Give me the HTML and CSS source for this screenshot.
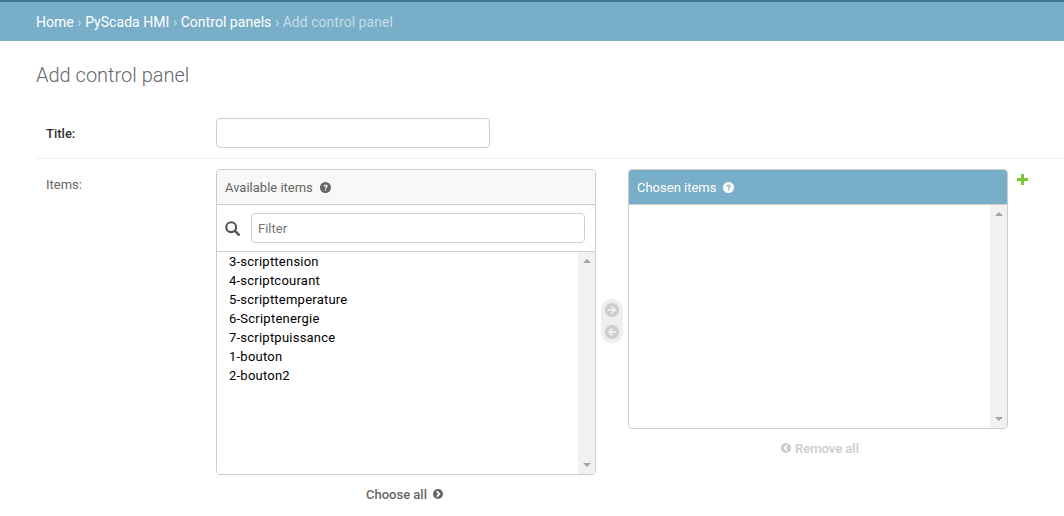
FILE: index.html
```html
<!DOCTYPE html>
<html lang="en">
<head>
    <meta charset="UTF-8">
    <meta name="viewport" content="width=device-width, initial-scale=1.0">
    <title>Add control panel</title>
    <link rel="stylesheet" href="styles.css">
</head>
<body>
    <div class="breadcrumbs">
        <a href="#">Home</a> › <a href="#">PyScada HMI</a> › <a href="#">Control panels</a> › Add control panel
    </div>

    <div class="content">
        <h1>Add control panel</h1>

        <form>
            <div class="form-row">
                <label class="required" for="id_title">Title:</label>
                <input class="title-input" id="id_title" type="text">
            </div>

            <div class="form-row">
                <label class="items-label">Items:</label>
                <div class="selector">
                    <div class="selector-side">
                        <div class="box">
                            <h2 class="box-title">Available items
                                <svg class="help" viewBox="0 0 12 12"><circle cx="6" cy="6" r="6" fill="currentColor"/><path d="M3.900 4.700c0-1.300 1-2.100 2.200-2.100s2.200.8 2.200 1.900c0 1.500-1.500 1.500-1.500 2.600H5.300c0-1.900 1.400-1.800 1.400-2.500 0-.4-.3-.6-.7-.6-.5 0-.7.3-.8.8zM5.300 7.800h1.500v1.500H5.300z" fill="#f8f8f8"/></svg>
                            </h2>
                            <div class="filter">
                                <svg class="search" viewBox="0 0 14 14"><circle cx="5.800" cy="5.800" r="4.600" fill="none" stroke="#555" stroke-width="2"/><path d="M9.200 9.200l3.600 3.600" stroke="#555" stroke-width="2.400" stroke-linecap="round"/></svg>
                                <input class="filter-input" type="text" placeholder="Filter">
                            </div>
                            <div class="list list-available">
                                <ul>
                                    <li>3-scripttension</li>
                                    <li>4-scriptcourant</li>
                                    <li>5-scripttemperature</li>
                                    <li>6-Scriptenergie</li>
                                    <li>7-scriptpuissance</li>
                                    <li>1-bouton</li>
                                    <li>2-bouton2</li>
                                </ul>
                                <div class="scrollbar"><span class="arrow-up"></span><span class="arrow-down"></span></div>
                            </div>
                        </div>
                        <a class="all-link choose-all" href="#">Choose all
                            <svg class="all-icon" viewBox="0 0 12 12"><circle cx="6" cy="6" r="6" fill="currentColor"/><path d="M4.600 2.900L7.700 6 4.600 9.100" fill="none" stroke="#fff" stroke-width="2"/></svg>
                        </a>
                    </div>

                    <div class="mover">
                        <svg class="mover-icon" viewBox="0 0 16 16"><circle cx="8" cy="8" r="8" fill="#ccc"/><path d="M3 8h8M7.500 4L11.500 8l-4 4" fill="none" stroke="#eee" stroke-width="2.400"/></svg>
                        <svg class="mover-icon" viewBox="0 0 16 16"><circle cx="8" cy="8" r="8" fill="#ccc"/><path d="M13 8H5M8.500 4L4.500 8l4 4" fill="none" stroke="#eee" stroke-width="2.400"/></svg>
                    </div>

                    <div class="selector-side">
                        <div class="box">
                            <h2 class="box-title box-title-chosen">Chosen items
                                <svg class="help" viewBox="0 0 12 12"><circle cx="6" cy="6" r="6" fill="currentColor"/><path d="M3.900 4.700c0-1.300 1-2.100 2.200-2.100s2.200.8 2.200 1.900c0 1.500-1.500 1.500-1.500 2.600H5.300c0-1.900 1.400-1.800 1.400-2.500 0-.4-.3-.6-.7-.6-.5 0-.7.3-.8.8zM5.300 7.800h1.500v1.500H5.300z" fill="#79aec8"/></svg>
                            </h2>
                            <div class="list list-chosen">
                                <ul></ul>
                                <div class="scrollbar"><span class="arrow-up"></span><span class="arrow-down"></span></div>
                            </div>
                        </div>
                        <a class="all-link remove-all" href="#">
                            <svg class="all-icon" viewBox="0 0 12 12"><circle cx="6" cy="6" r="6" fill="currentColor"/><path d="M7.400 2.900L4.300 6l3.100 3.100" fill="none" stroke="#fff" stroke-width="2"/></svg>
                            Remove all
                        </a>
                    </div>

                    <a class="add-related" href="#">
                        <svg viewBox="0 0 11 11"><path d="M4 0h3v4h4v3H7v4H4V7H0V4h4z" fill="#78c637"/></svg>
                    </a>
                </div>
            </div>
        </form>
    </div>
</body>
</html>
```

FILE: styles.css
```css
html, body {
    height: 100%;
    overflow: hidden;
}

body {
    margin: 0;
    font-family: Roboto, "Liberation Sans", sans-serif;
    font-size: 14px;
    color: #333;
    background-color: #fff;
}

a {
    text-decoration: none;
}

.breadcrumbs {
    height: 39px;
    line-height: 40px;
    padding: 0 36px;
    font-size: 14px;
    letter-spacing: .04px;
    color: #c4dce8;
    background-color: #79aec8;
    border-top: 2px solid #417690;
}

.breadcrumbs a {
    color: #fff;
}

.content {
    padding: 20px 0 0 36px;
}

h1 {
    margin: 0 0 19px 0;
    font-size: 20px;
    line-height: 28px;
    font-weight: 300;
    color: #666;
}

.form-row {
    display: flex;
    padding: 10px;
    border-bottom: 1px solid #eee;
}

.form-row label {
    width: 170px;
    flex-shrink: 0;
    font-size: 13px;
    color: #666;
}

.form-row label.required {
    line-height: 32px;
    height: 30px;
    font-weight: 500;
    color: #333;
}

.form-row .items-label {
    padding-top: 8px;
}

.title-input {
    box-sizing: border-box;
    width: 274px;
    height: 30px;
    margin: 0;
    border: 1px solid #ccc;
    border-radius: 4px;
}

.selector {
    display: flex;
    align-items: flex-start;
}

.selector-side {
    width: 380px;
}

.box {
    box-sizing: border-box;
    border: 1px solid #ccc;
    border-radius: 4px;
    overflow: hidden;
}

.box-title {
    display: flex;
    align-items: center;
    gap: 6px;
    box-sizing: border-box;
    height: 35px;
    margin: 0;
    padding: 0 8px;
    font-size: 13px;
    font-weight: 400;
    color: #666;
    background-color: #f8f8f8;
    border-bottom: 1px solid #ccc;
}

.box-title-chosen {
    color: #fff;
    background-color: #79aec8;
}

.help {
    width: 11px;
    height: 11px;
    margin-left: 1px;
}

.filter {
    display: flex;
    align-items: center;
    box-sizing: border-box;
    height: 47px;
    padding: 0 10px 0 8px;
    border-bottom: 1px solid #ccc;
}

.search {
    width: 15px;
    height: 15px;
    margin-right: 11px;
    flex-shrink: 0;
}

.filter-input {
    box-sizing: border-box;
    flex: 1;
    min-width: 0;
    height: 30px;
    margin: 0;
    padding: 0 6px;
    font-family: inherit;
    font-size: 13px;
    border: 1px solid #ccc;
    border-radius: 4px;
}

.filter-input::placeholder {
    color: #757575;
}

.list {
    display: flex;
    background-color: #fff;
}

.list-available {
    height: 222px;
}

.list-chosen {
    height: 223px;
}

.list ul {
    flex: 1;
    margin: 0;
    padding: 0 12px;
    list-style: none;
    font-size: 13px;
    line-height: 19px;
    letter-spacing: .23px;
    color: #000;
}

.scrollbar {
    display: flex;
    flex-direction: column;
    justify-content: space-between;
    align-items: center;
    width: 17px;
    padding: 7px 0;
    box-sizing: border-box;
    background-color: #f1f1f1;
}

.arrow-up {
    border-left: 4px solid transparent;
    border-right: 4px solid transparent;
    border-bottom: 4px solid #a3a3a3;
}

.arrow-down {
    border-left: 4px solid transparent;
    border-right: 4px solid transparent;
    border-top: 4px solid #a3a3a3;
}

.all-link {
    display: flex;
    align-items: center;
    justify-content: center;
    height: 38px;
    font-size: 13px;
    font-weight: 500;
}

.choose-all {
    gap: 6px;
    padding-right: 3px;
    color: #666;
}

.remove-all {
    gap: 4px;
    padding-left: 4px;
    color: #ccc;
}

.all-icon {
    width: 10px;
    height: 10px;
}

.mover {
    display: flex;
    flex-direction: column;
    align-items: center;
    gap: 8px;
    box-sizing: border-box;
    width: 22px;
    height: 44px;
    margin: 130px 5px 0 5px;
    padding-top: 4px;
    background-color: #eee;
    border-radius: 11px;
}

.mover-icon {
    width: 14px;
    height: 14px;
}

.add-related {
    display: block;
    width: 11px;
    height: 11px;
    margin: 5px 0 0 9px;
}

.add-related svg {
    display: block;
}
```
